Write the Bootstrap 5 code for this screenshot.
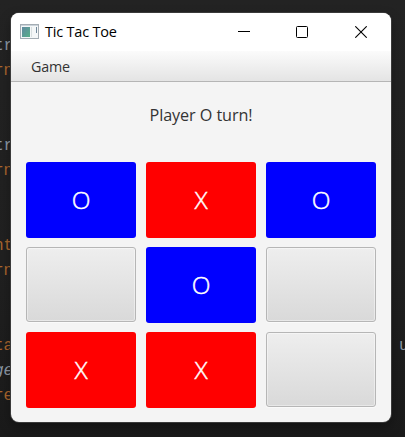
<!DOCTYPE html>
<html lang="en">
<head>
<meta charset="utf-8">
<meta name="viewport" content="width=device-width, initial-scale=1">
<title>Tic Tac Toe</title>
<link href="https://cdn.jsdelivr.net/npm/bootstrap@5.3.0/dist/css/bootstrap.min.css" rel="stylesheet">
<style>
  body { width: 405px; height: 437px; background: linear-gradient(#232323, #202020 60%, #1a1a1a); font-family: "Open Sans", "Noto Sans", sans-serif; }
  .code-line { position: absolute; left: -6px; font: 16px/25px "Liberation Mono", monospace; color: #a9b7c6; opacity: .8; white-space: pre; }
  .code-keyword { color: #cc7832; }
  .app-window { width: 380px; height: 409px; margin: 13px 0 0 11px; background: #f4f4f4; border-radius: 8px; box-shadow: 0 0 0 1px #3a3a3a, 0 5px 12px rgba(0,0,0,.35); }
  .title-bar { height: 38px; background: #fff; padding-left: 9px; }
  .app-title { font-size: 14.5px; letter-spacing: -.2px; color: #000; margin-left: 5px; line-height: 36px; }
  .window-controls { margin-left: auto; gap: 46px; padding-right: 24px; }
  .close-icon { margin-left: 1px; }
  .menu-strip { height: 31px; background: linear-gradient(#fbfbfb, #e4e4e4); border-bottom: 1px solid #b5b5b5; padding-left: 20px; font-size: 14.3px; letter-spacing: -.2px; color: #333; line-height: 31px; }
  .status-line { height: 80px; line-height: 66px; font-size: 16.2px; letter-spacing: -.08px; color: #333; }
  .board { display: grid; grid-template-columns: repeat(3, 110px); grid-auto-rows: 76px; gap: 9px 10px; padding: 0 15px; }
  .cell { --bs-btn-padding-x: 0; --bs-btn-padding-y: 0; border: 0; border-radius: 3px; font-size: 24.5px; line-height: 76px; font-weight: 300; -webkit-text-stroke: .45px #fff; color: #fff; }
  .cell-o { background: #00f; }
  .cell-x { background: #f00; }
  .cell-empty { height: 75px; border: 1px solid #b6b6b6; background: linear-gradient(#eee, #d9d9d9); box-shadow: inset 0 0 0 1px rgba(255,255,255,.4), 0 1px 0 #fafafa; }
</style>
</head>
<body class="m-0 overflow-hidden position-relative d-flex align-items-start">
  <div class="code-line" style="top:34px">tr</div>
  <div class="code-line code-keyword" style="top:59px">rn</div>
  <div class="code-line" style="top:134px">tr</div>
  <div class="code-line code-keyword" style="top:159px">rn</div>
  <div class="code-line code-keyword" style="top:234px">nt</div>
  <div class="code-line code-keyword" style="top:259px">rn</div>
  <div class="code-line code-keyword" style="top:334px">ta</div>
  <div class="code-line fst-italic" style="top:359px">ge</div>
  <div class="code-line code-keyword" style="top:384px">re</div>
  <div class="code-line" style="top:334px;left:399px">u</div>

  <main class="app-window overflow-hidden position-relative flex-shrink-0">
    <header class="title-bar d-flex align-items-center">
      <svg width="20" height="16" viewBox="0 0 20 16">
        <defs><linearGradient id="pane" x2="1" y2="1"><stop stop-color="#6088a0"/><stop offset="1" stop-color="#57b08a"/></linearGradient></defs>
        <rect x=".5" y=".5" width="18" height="14" fill="#f4f7f8" stroke="#a4adb4"/>
        <path d="M1 1.5H18" stroke="#cbd3da"/>
        <rect x="2" y="3" width="8" height="10" fill="url(#pane)"/>
        <path d="M11.5 3V13" stroke="#d8dfe0"/>
        <path d="M16.5 3V9" stroke="#71889a"/>
      </svg>
      <span class="app-title">Tic Tac Toe</span>
      <div class="window-controls d-flex align-items-center">
        <svg width="12" height="12" viewBox="0 0 12 12"><path d="M0 5.5H12" stroke="#000"/></svg>
        <svg width="12" height="12" viewBox="0 0 12 12"><rect x=".5" y=".5" width="11" height="11" rx="1" fill="none" stroke="#000"/></svg>
        <svg class="close-icon" width="12" height="12" viewBox="0 0 12 12"><path d="M.3.3 11.7 11.7M11.7.3.3 11.7" stroke="#000" stroke-width="1.1"/></svg>
      </div>
    </header>
    <nav class="menu-strip">Game</nav>
    <div class="status-line text-center">Player O turn!</div>
    <div class="board">
      <button class="btn cell cell-o">O</button>
      <button class="btn cell cell-x">X</button>
      <button class="btn cell cell-o">O</button>
      <button class="btn cell cell-empty" aria-label="Empty"></button>
      <button class="btn cell cell-o">O</button>
      <button class="btn cell cell-empty" aria-label="Empty"></button>
      <button class="btn cell cell-x">X</button>
      <button class="btn cell cell-x">X</button>
      <button class="btn cell cell-empty" aria-label="Empty"></button>
    </div>
  </main>
<script src="https://cdn.jsdelivr.net/npm/bootstrap@5.3.0/dist/js/bootstrap.bundle.min.js"></script>
</body>
</html>
